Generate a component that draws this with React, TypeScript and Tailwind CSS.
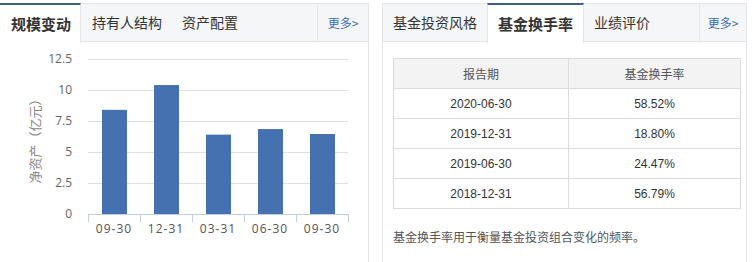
import React from "react";

const cjk = { fontFamily: '"Microsoft YaHei","Noto Sans CJK SC",sans-serif' };

const bars = [
  { label: "09-30", v: 8.4 },
  { label: "12-31", v: 10.4 },
  { label: "03-31", v: 6.4 },
  { label: "06-30", v: 6.85 },
  { label: "09-30", v: 6.45 },
];

function Chart() {
  const base = 172; // y of zero in svg coords (page 214 - 42)
  const k = 12.4;
  const ticks = [0, 2.5, 5, 7.5, 10, 12.5];
  return (
    <svg width="368" height="220" className="block">
      {ticks.map((t) => {
        const y = base - t * k;
        return (
          <g key={t}>
            {t !== 0 && <line x1="88" x2="348" y1={y + 0.5} y2={y + 0.5} stroke="#e0e0e0" strokeWidth="1" />}
            <text
              x="72"
              y={y + 4}
              textAnchor="end"
              fontSize="12"
              fill="#666"
              style={{ fontFamily: '"Open Sans","Noto Sans",sans-serif' }}
            >
              {t}
            </text>
          </g>
        );
      })}
      {bars.map((b, i) => {
        const h = b.v * k;
        return (
          <rect key={i} x={102 + i * 52} y={base - h} width="25" height={h} fill="#4671b0" />
        );
      })}
      <line x1="88" x2="348" y1={base + 0.5} y2={base + 0.5} stroke="#c0d0e0" strokeWidth="1" />
      {[0, 1, 2, 3, 4, 5].map((i) => (
        <line
          key={i}
          x1={88 + i * 52 + 0.5}
          x2={88 + i * 52 + 0.5}
          y1={base}
          y2={base + 8}
          stroke="#c0d0e0"
          strokeWidth="1"
        />
      ))}
      {bars.map((b, i) => (
        <text
          key={i}
          x={114 + i * 52}
          y={base + 19}
          textAnchor="middle"
          fontSize="12"
          fill="#555"
          letterSpacing="1"
          style={{ fontFamily: '"Open Sans","Noto Sans",sans-serif' }}
        >
          {b.label}
        </text>
      ))}
      <text
        transform="translate(40 96) rotate(-90)"
        textAnchor="middle"
        fontSize="13"
        fill="#888"
        style={cjk}
      >
        净资产（亿元）
      </text>
    </svg>
  );
}

const rows = [
  ["2020-06-30", "58.52%"],
  ["2019-12-31", "18.80%"],
  ["2019-06-30", "24.47%"],
  ["2018-12-31", "56.79%"],
];

export default function App() {
  return (
    <div className="flex w-[754px] h-[262px] bg-white pt-[3px] overflow-hidden" style={cjk}>
      {/* Left panel */}
      <div className="w-[369px] shrink-0 border-r border-[#e3e5e8] flex flex-col">
        <div className="h-[39px] flex bg-[#f5f6f8] border-t border-b border-[#e3e5e8]">
          <div className="w-[81px] -mt-px -mb-px h-[40px] bg-white border-t-2 border-r border-t-[#3d5f8d] border-r-[#e3e5e8] flex items-center pl-[11px] text-[15px] font-bold text-[#333]">
            规模变动
          </div>
          <div className="flex items-center pl-[11px] text-[14px] text-[#333] gap-[20px]">
            <span>持有人结构</span>
            <span>资产配置</span>
          </div>
          <div className="ml-auto w-[51px] border-l border-[#e3e5e8] flex items-center justify-center text-[12px] text-[#3b6db3]">
            更多&gt;
          </div>
        </div>
        <Chart />
      </div>

      {/* Right panel */}
      <div className="ml-[13px] w-[365px] shrink-0 border-l border-r border-[#e3e5e8] flex flex-col">
        <div className="h-[39px] flex bg-[#f5f6f8] border-t border-b border-[#e3e5e8]">
          <div className="flex items-center px-[10px] text-[14px] text-[#333]">基金投资风格</div>
          <div className="-mt-px -mb-px h-[40px] w-[97px] bg-white border-t-2 border-l border-r border-t-[#3d5f8d] border-l-[#e3e5e8] border-r-[#e3e5e8] flex items-center justify-center text-[15px] font-bold text-[#333]">
            基金换手率
          </div>
          <div className="flex items-center px-[10px] text-[14px] text-[#333]">业绩评价</div>
          <div className="ml-auto w-[47px] border-l border-[#e3e5e8] flex items-center justify-center text-[12px] text-[#3b6db3]">
            更多&gt;
          </div>
        </div>
        <div className="pl-[10px] pt-[16px]">
          <table className="w-[348px] border-collapse text-[12px]">
            <thead>
              <tr className="bg-[#f3f3f3] h-[30px]">
                <th className="border border-[#dcdcdc] font-normal text-[#555] w-[175px]">报告期</th>
                <th className="border border-[#dcdcdc] font-normal text-[#555]">基金换手率</th>
              </tr>
            </thead>
            <tbody style={{ fontFamily: '"Liberation Sans",Arial,sans-serif' }}>
              {rows.map((r) => (
                <tr key={r[0]} className="h-[30px]">
                  <td className="border border-[#dcdcdc] text-center text-[#333]">{r[0]}</td>
                  <td className="border border-[#dcdcdc] text-center text-[#333]">{r[1]}</td>
                </tr>
              ))}
            </tbody>
          </table>
          <div className="mt-[19px] text-[12px] text-[#555]">基金换手率用于衡量基金投资组合变化的频率。</div>
        </div>
      </div>
    </div>
  );
}
